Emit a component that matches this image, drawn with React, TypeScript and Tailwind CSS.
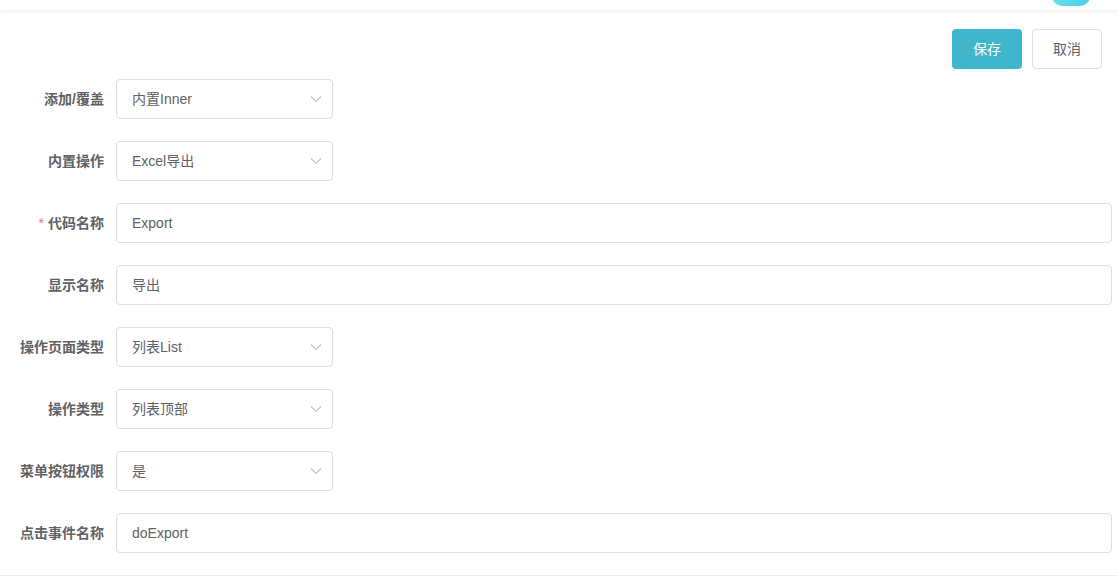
import React from "react";

const font = { fontFamily: '"Liberation Sans", "Noto Sans CJK SC", sans-serif' };

function Chevron() {
  return (
    <svg width="12" height="8" viewBox="0 0 12 8" className="shrink-0">
      <path d="M1 1.5 L6 6.5 L11 1.5" fill="none" stroke="#c0c4cc" strokeWidth="1.1" />
    </svg>
  );
}

function Row({ label, value, select, required }: { label: string; value: string; select?: boolean; required?: boolean }) {
  return (
    <div className="flex items-center h-10">
      <div className="w-[104px] shrink-0 flex justify-end items-center text-[14px] font-bold text-[#606266]">
        {required && <span className="text-[#f56c6c] font-normal mr-[4px]">*</span>}
        {label}
      </div>
      <div className="ml-3 flex-1 min-w-0">
        {select ? (
          <div className="w-[217px] h-10 border border-[#dcdfe6] rounded-[4px] bg-white flex items-center justify-between pl-[15px] pr-[10px] text-[14px] text-[#606266]">
            <span>{value}</span>
            <Chevron />
          </div>
        ) : (
          <div className="h-10 border border-[#dcdfe6] rounded-[4px] bg-white flex items-center pl-[15px] text-[14px] text-[#606266]">
            {value}
          </div>
        )}
      </div>
    </div>
  );
}

export default function App() {
  return (
    <div className="w-[1118px] h-[581px] bg-white overflow-hidden relative" style={font}>
      <div className="h-[10px] bg-white shadow-[0_2px_4px_rgba(0,0,0,0.06)] relative">
        <div className="absolute left-[1052px] top-[-20px] w-[38px] h-[26px] rounded-[10px] bg-gradient-to-r from-[#63e3ec] to-[#4ccde6]" />
      </div>
      <div className="pt-[19px] pr-[6px]">
        <div className="flex justify-end gap-[10px] pr-[10px]">
          <button className="w-[70px] h-10 rounded-[4px] bg-[#3fb6cc] text-white text-[14px]">保存</button>
          <button className="w-[70px] h-10 rounded-[4px] border border-[#dcdfe6] bg-white text-[#606266] text-[14px]">取消</button>
        </div>
        <div className="mt-[10px] flex flex-col gap-[22px] pb-[22px] border-b border-[#ebeef5] mr-[-6px] pr-[6px]">
          <Row label="添加/覆盖" value="内置Inner" select />
          <Row label="内置操作" value="Excel导出" select />
          <Row label="代码名称" value="Export" required />
          <Row label="显示名称" value="导出" />
          <Row label="操作页面类型" value="列表List" select />
          <Row label="操作类型" value="列表顶部" select />
          <Row label="菜单按钮权限" value="是" select />
          <Row label="点击事件名称" value="doExport" />
        </div>
      </div>
    </div>
  );
}
